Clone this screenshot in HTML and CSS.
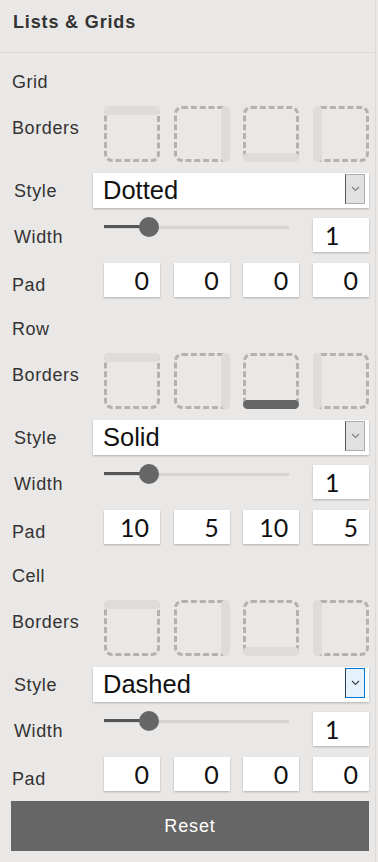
FILE: index.html
```html
<!DOCTYPE html>
<html lang="en">

<head>
  <meta charset="UTF-8" />
  <meta name="viewport" content="width=device-width, initial-scale=1" />
  <title>Lists &amp; Grids</title>
  <link rel="stylesheet" href="styles.css">
</head>

<body>
  <div id="panel">
    <div id="panelTitle">Lists &amp; Grids</div>

    <!-- grid -->
    <div class="section">
      <div class="sectionTitle">Grid</div>
      <div class="row bordersRow">
        <div class="label">Borders</div>
        <div class="controls sides">
          <div class="side top"></div>
          <div class="side right"></div>
          <div class="side bottom"></div>
          <div class="side left"></div>
        </div>
      </div>
      <div class="row styleRow">
        <div class="label">Style</div>
        <div class="select">
          <span class="selectValue">Dotted</span>
          <span class="selectArrow"><svg width="9" height="6" viewBox="0 0 9 6"><polyline points="1,1 4.5,4.5 8,1" /></svg></span>
        </div>
      </div>
      <div class="row widthRow">
        <div class="label">Width</div>
        <div class="controls">
          <div class="slider">
            <div class="sliderFill" style="width: 45px"></div>
            <div class="sliderThumb" style="left: 35px"></div>
          </div>
          <input class="num numLeft" type="text" value="1">
        </div>
      </div>
      <div class="row padRow">
        <div class="label">Pad</div>
        <div class="controls">
          <input class="num" type="text" value="0">
          <input class="num" type="text" value="0">
          <input class="num" type="text" value="0">
          <input class="num" type="text" value="0">
        </div>
      </div>
    </div>

    <!-- row -->
    <div class="section">
      <div class="sectionTitle">Row</div>
      <div class="row bordersRow">
        <div class="label">Borders</div>
        <div class="controls sides">
          <div class="side top"></div>
          <div class="side right"></div>
          <div class="side bottom on"></div>
          <div class="side left"></div>
        </div>
      </div>
      <div class="row styleRow">
        <div class="label">Style</div>
        <div class="select">
          <span class="selectValue">Solid</span>
          <span class="selectArrow"><svg width="9" height="6" viewBox="0 0 9 6"><polyline points="1,1 4.5,4.5 8,1" /></svg></span>
        </div>
      </div>
      <div class="row widthRow">
        <div class="label">Width</div>
        <div class="controls">
          <div class="slider">
            <div class="sliderFill" style="width: 45px"></div>
            <div class="sliderThumb" style="left: 35px"></div>
          </div>
          <input class="num numLeft" type="text" value="1">
        </div>
      </div>
      <div class="row padRow">
        <div class="label">Pad</div>
        <div class="controls">
          <input class="num" type="text" value="10">
          <input class="num" type="text" value="5">
          <input class="num" type="text" value="10">
          <input class="num" type="text" value="5">
        </div>
      </div>
    </div>

    <!-- cell -->
    <div class="section">
      <div class="sectionTitle">Cell</div>
      <div class="row bordersRow">
        <div class="label">Borders</div>
        <div class="controls sides">
          <div class="side top"></div>
          <div class="side right"></div>
          <div class="side bottom"></div>
          <div class="side left"></div>
        </div>
      </div>
      <div class="row styleRow">
        <div class="label">Style</div>
        <div class="select">
          <span class="selectValue">Dashed</span>
          <span class="selectArrow hover"><svg width="9" height="6" viewBox="0 0 9 6"><polyline points="1,1 4.5,4.5 8,1" /></svg></span>
        </div>
      </div>
      <div class="row widthRow">
        <div class="label">Width</div>
        <div class="controls">
          <div class="slider">
            <div class="sliderFill" style="width: 45px"></div>
            <div class="sliderThumb" style="left: 35px"></div>
          </div>
          <input class="num numLeft" type="text" value="1">
        </div>
      </div>
      <div class="row padRow">
        <div class="label">Pad</div>
        <div class="controls">
          <input class="num" type="text" value="0">
          <input class="num" type="text" value="0">
          <input class="num" type="text" value="0">
          <input class="num" type="text" value="0">
        </div>
      </div>
    </div>

    <div id="resetButton">Reset</div>
  </div>
</body>

</html>
```

FILE: styles.css
```css
html {
  background: #eae8e6;
}

body {
  margin: 0;
  padding: 0;
  background: #eae8e6;
  font-family: "Liberation Sans", Arial, sans-serif;
  color: #333;
}

#panel {
  width: 376px;
  min-height: 862px;
  border-right: 1px solid #dddbd9;
  box-sizing: border-box;
  padding-bottom: 11px;
}

#panelTitle {
  height: 52px;
  line-height: 44px;
  padding-left: 13px;
  font-size: 18px;
  font-weight: bold;
  letter-spacing: 0.85px;
  color: #333;
  border-bottom: 1px solid #dcdad8;
}

.section {
  display: flex;
  flex-direction: column;
  padding-left: 12px;
}

.section + .section .sectionTitle {
  margin-top: 22px;
}

.sectionTitle {
  margin-top: 19px;
  height: 20px;
  line-height: 20px;
  font-size: 18px;
  letter-spacing: 0.5px;
}

.row {
  display: flex;
  align-items: center;
}

.label {
  width: 92px;
  flex-shrink: 0;
  font-size: 18px;
  letter-spacing: 0.6px;
  line-height: 20px;
}

.controls {
  width: 265px;
  display: flex;
  justify-content: space-between;
}

/* borders */
.bordersRow {
  margin-top: 14px;
  height: 56px;
}

.bordersRow .label {
  padding-bottom: 12px;
}

.side {
  width: 56px;
  height: 56px;
  box-sizing: border-box;
  border: 3px dashed #b3b2b1;
  border-radius: 8px;
  position: relative;
}

.side::after {
  content: "";
  position: absolute;
  background: #dddcdb;
  border-radius: 5px;
}

.side.on::after {
  background: #666;
}

.side.top::after {
  top: -3px;
  left: -3px;
  right: -3px;
  height: 9px;
}

.side.bottom::after {
  bottom: -3px;
  left: -3px;
  right: -3px;
  height: 9px;
}

.side.right::after {
  top: -3px;
  bottom: -3px;
  right: -3px;
  width: 9px;
}

.side.left::after {
  top: -3px;
  bottom: -3px;
  left: -3px;
  width: 9px;
}

/* style */
.styleRow {
  margin-top: 11px;
  height: 35px;
}

.styleRow .label {
  padding-left: 2px;
  width: 79px;
}

.select {
  width: 276px;
  height: 35px;
  background: white;
  box-shadow: 0 1px 2px rgba(0, 0, 0, 0.25);
  position: relative;
  display: flex;
  align-items: center;
}

.selectValue {
  padding-left: 10px;
  font-size: 25.5px;
  color: #111;
}

.selectArrow {
  position: absolute;
  right: 4px;
  top: 1px;
  bottom: 4px;
  width: 18px;
  background: #e1e1e1;
  border: 1px solid #adadad;
  border-left-color: #555;
  display: flex;
  align-items: center;
  justify-content: center;
}

.selectArrow svg polyline {
  fill: none;
  stroke: #808080;
  stroke-width: 1.2;
}

.selectArrow.hover {
  background: #e5f1fb;
  border-color: #0078d7;
  border-left-color: #1c3f66;
}

.selectArrow.hover svg polyline {
  stroke: #444;
}

/* width */
.widthRow {
  margin-top: 10px;
  height: 34px;
  align-items: flex-start;
}

.widthRow .label {
  padding-left: 2px;
  width: 90px;
  padding-top: 9px;
}

.slider {
  width: 185px;
  height: 20px;
  margin-top: -1px;
  position: relative;
  background: linear-gradient(#d5d4d3, #d5d4d3) no-repeat 0 50% / 100% 3px;
}

.sliderFill {
  position: absolute;
  left: 0;
  top: 8px;
  height: 3px;
  background: #555;
}

.sliderThumb {
  position: absolute;
  top: 0;
  width: 20px;
  height: 20px;
  border-radius: 50%;
  background: #666;
}

/* pad */
.padRow {
  margin-top: 11px;
  height: 34px;
}

.padRow .label {
  padding-top: 9px;
}

.num {
  width: 56px;
  height: 34px;
  box-sizing: border-box;
  border: 0;
  margin: 0;
  padding: 0 11px 1px 0;
  background: white;
  box-shadow: 0 1px 2px rgba(0, 0, 0, 0.25);
  font-family: Lato, "Liberation Sans", sans-serif;
  font-size: 25px;
  color: #111;
  text-align: right;
  outline: none;
}

.numLeft {
  text-align: left;
  padding-left: 12px;
  padding-right: 0;
}

/* reset */
#resetButton {
  margin: 10px 0 0 11px;
  width: 358px;
  height: 50px;
  line-height: 50px;
  background: #666;
  color: white;
  text-align: center;
  font-size: 18px;
  letter-spacing: 0.9px;
}
```
